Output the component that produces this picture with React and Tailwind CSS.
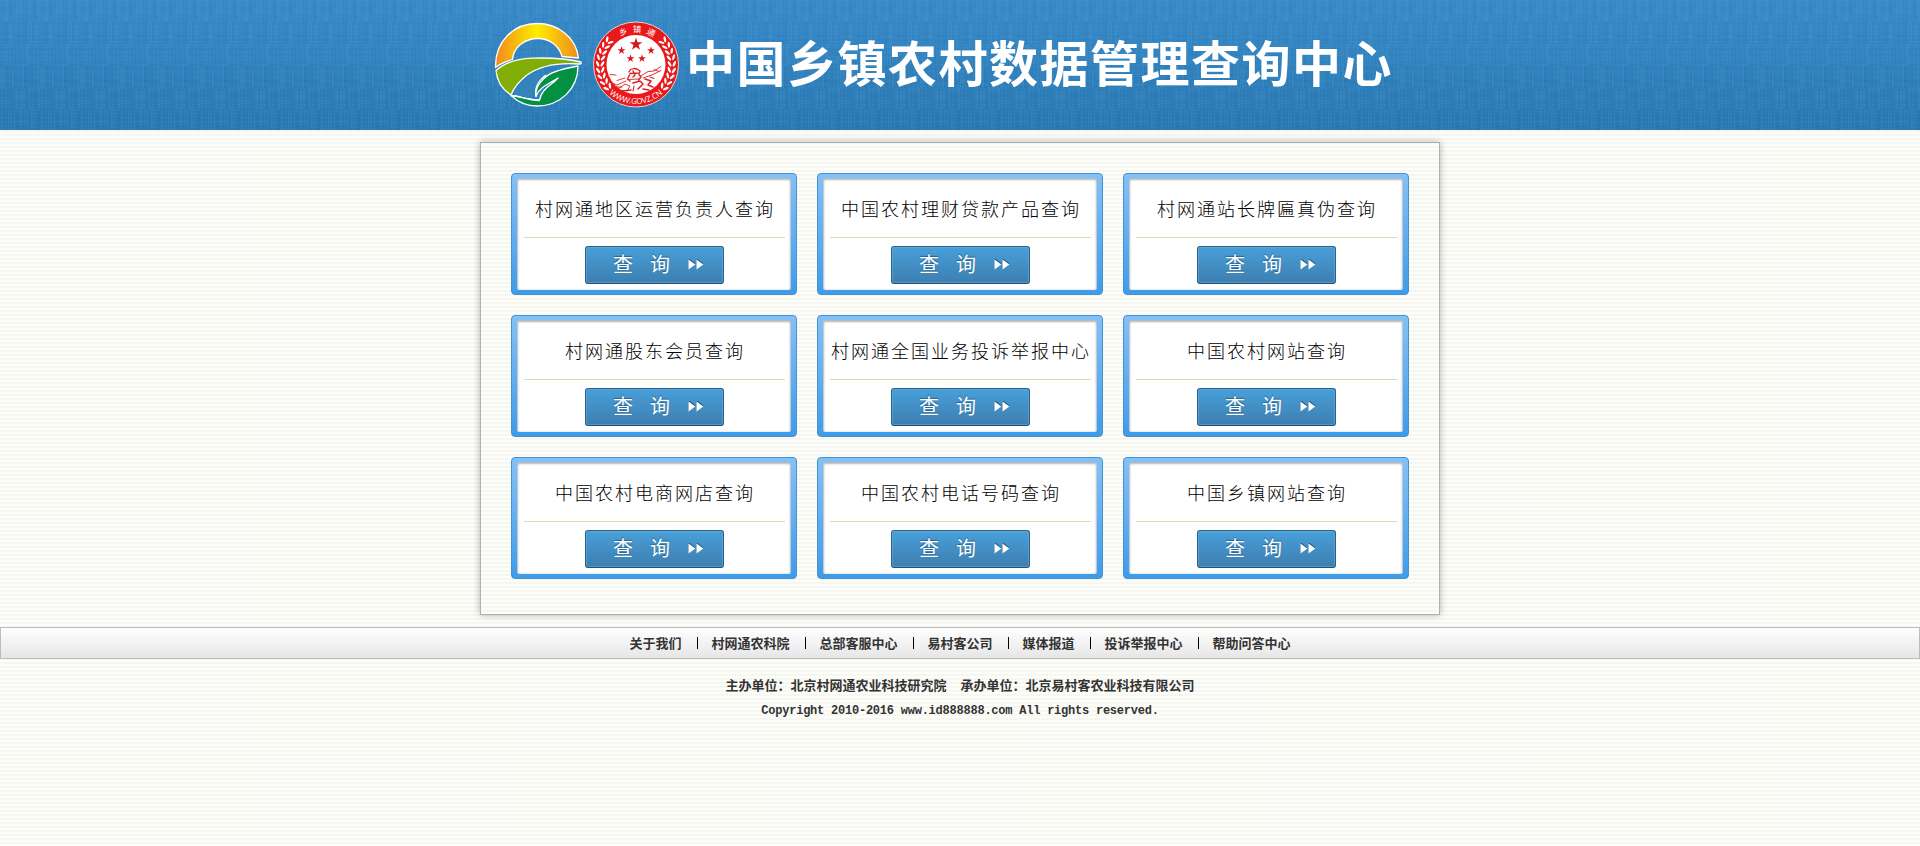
import React from 'react';

const SANS = "font-['Noto_Sans_CJK_SC',sans-serif]";

const cards = [
  '村网通地区运营负责人查询',
  '中国农村理财贷款产品查询',
  '村网通站长牌匾真伪查询',
  '村网通股东会员查询',
  '村网通全国业务投诉举报中心',
  '中国农村网站查询',
  '中国农村电商网店查询',
  '中国农村电话号码查询',
  '中国乡镇网站查询',
];

const links = ['关于我们', '村网通农科院', '总部客服中心', '易村客公司', '媒体报道', '投诉举报中心', '帮助问答中心'];

// Small deterministic generator for the woven header cloth.
const noise = (n) => {
  const v = Math.sin(n * 127.1 + 31.7) * 43758.5453;
  return v - Math.floor(v);
};

function Cloth() {
  const threads = [];
  for (let x = 0; x < 40; x++) {
    for (let b = 0; b < 6; b++) {
      const v = noise(x * 7 + b * 53);
      threads.push(
        <rect key={`v${x}-${b}`} x={x} y={b * 22} width="1" height="22" fill={v > 0.5 ? '#6fbcf0' : '#0b4f8c'} opacity={Math.abs(v - 0.5) * 0.2} />
      );
    }
  }
  for (let y = 0; y < 130; y++) {
    for (let b = 0; b < 3; b++) {
      const v = noise(y * 3 + b * 91 + 900);
      threads.push(
        <rect key={`h${y}-${b}`} x={b * 14} y={y} width="14" height="1" fill={v > 0.5 ? '#6fbcf0' : '#0b4f8c'} opacity={Math.abs(v - 0.5) * 0.13} />
      );
    }
  }
  return (
    <svg className="absolute inset-0 h-full w-full" aria-hidden="true">
      <defs>
        <pattern id="cloth" width="40" height="130" patternUnits="userSpaceOnUse">{threads}</pattern>
      </defs>
      <rect width="100%" height="100%" fill="url(#cloth)" />
    </svg>
  );
}

function SunLogo() {
  return (
    <svg width="90" height="86" viewBox="0 0 90 86" className="block">
      <defs>
        <linearGradient id="sun" x1="0" x2="1">
          <stop offset="0" stopColor="#f08a1c" />
          <stop offset="0.5" stopColor="#ffec00" />
          <stop offset="1" stopColor="#f08a1c" />
        </linearGradient>
      </defs>
      <g stroke="#fff" strokeWidth="1.3" strokeLinejoin="round">
        <path d="M1.5 45.5 C1 19 20 1.5 43 1.5 C65 1.5 82 16 84.5 36 L68 34.500 C65 23 55 16.500 44 16.500 C31 16.500 19.500 25 18.500 37.500 C12 39.500 6 42 1.500 45.500Z" fill="url(#sun)" />
        <path d="M2 48.500 C10 41 22 37 38 36.200 C56 35.500 72 36.500 87 40 C87.500 41.500 87 42 85.500 42 C66 40.500 47 43 33 53 C26 58.500 20 65 17 73 C7.500 67 2.800 58 2 48.500Z" fill="#80ae05" />
        <path d="M84 44 C66 47 55 51 50 56.500 C44 62 41 68 42 74 C45 66 54 62 64 56 C57 64 48 66 45.500 78 C36 78 25 74 17 73.500 C25 81 34 84 43 84 C66 84 84 67 84 44Z" fill="#029043" />
      </g>
      <path d="M20 72.500 C22 62 29 57 37 53.500 L52 53.500 C44 58 40 65 40.500 75 C33 77 26 74 20 72.500Z" fill="#3583bd" />
      <path d="M17 73.500 C25 73.500 34 78.500 45.500 78.500 M42 75 C40 64 45 58 52 53" fill="none" stroke="#fff" strokeWidth="1.3" />
    </svg>
  );
}

const STAR = 'M0 -1 L.2245 -.309 L.951 -.309 L.363 .118 L.588 .809 L0 .382 L-.588 .809 L-.363 .118 L-.951 -.309 L-.2245 -.309Z';

function Emblem() {
  const leaves = [];
  for (let i = 0; i < 9; i++) {
    const a = 141 + i * 10;
    for (const s of [1, -1]) {
      const t = (s === 1 ? a : 180 - a) * (Math.PI / 180);
      for (const [r, tilt] of [[33.600, 32], [38.300, -28]]) {
        const x = 43 + Math.cos(t) * r;
        const y = 43.5 + Math.sin(t) * r;
        const deg = (t * 180) / Math.PI + 90 + s * tilt;
        leaves.push(<ellipse key={`${i}${s}${r}`} cx={x} cy={y} rx="3.1" ry="1.2" fill="#fff" transform={`rotate(${deg} ${x} ${y})`} />);
      }
    }
  }
  const stars = [[43, 23.300, 6.800], [28.500, 29.500, 4.200], [58, 29.500, 4.200], [37.500, 37.500, 4.200], [49, 37.500, 4.200]];
  return (
    <svg width="86" height="88" viewBox="0 0 86 88" className="block">
      <circle cx="43" cy="43.5" r="42.500" fill="#e9191b" stroke="#f6dede" strokeWidth="0.9" />
      <circle cx="43" cy="43.5" r="29.500" fill="#fff" />
      {leaves}
      {stars.map(([x, y, r]) => (
        <path key={`${x}${y}`} d={STAR} fill="#d6161c" transform={`translate(${x} ${y}) scale(${r})`} />
      ))}
      <g fill="none" stroke="#dc2024" strokeLinecap="round" strokeLinejoin="round">
        <path d="M36 51 L37.500 48.500 L41 47.500 L44 48 L47 50 L46.500 52 L37 52.500" strokeWidth="1.300" />
        <path d="M36.500 54 L34.500 58 L37 60 M46 53.500 L48 56 L45.500 59 M40 50 L42 54 L40 56" strokeWidth="1.400" />
        <path d="M48 55 L55 50.500 L61 50 L68 45.500 M50 57 L59 54 L68 49.500 M61 48.500 L66 50.500" strokeWidth="0.900" />
        <path d="M35 58.500 L46 58 M33 60 L24 64 L19 62 M32 57 L24 59.500 M25 68 L32 63 L37 65 L34 70 M17 53.500 L23 54" strokeWidth="0.900" />
        <path d="M40 62 L47 60 L50 63 L45 68 M52 58 L58 60 L55 64 L60 66 M50 68 L56 69 M29 70 L38 69" strokeWidth="1.600" />
        <path d="M57 56 L61 57.500 M22 66 L29 66 M41 65 L40 70" strokeWidth="1.100" />
      </g>
      <defs>
        <path id="topArc" d="M11 43.500 A32 32 0 0 1 75 43.500" />
        <path id="bottomArc" d="M3.500 43.500 A39.500 39.500 0 0 0 82.500 43.500" />
      </defs>
      <text className={SANS} fontSize="8.500" fill="#fff" textAnchor="middle" letterSpacing="4.500">
        <textPath href="#topArc" startOffset="53%">乡镇通</textPath>
      </text>
      <text className="font-['Open_Sans',sans-serif]" fontSize="8" fill="#fff" textAnchor="middle">
        <textPath href="#bottomArc" startOffset="50%">WWW.GOVZ.CN</textPath>
      </text>
    </svg>
  );
}

function QueryButton() {
  return (
    <button className="flex h-[38px] w-[139px] items-center rounded-[3px] border border-[#2a618b] border-b-[#1f5077] bg-gradient-to-b from-[#499fd9] to-[#3d7fb0] pl-[27px] shadow-[inset_0_0_0_1px_rgba(110,180,225,0.45)]">
      <span className="-mt-0.5 w-[37px] text-left text-[20px] leading-[34px] text-white [text-shadow:0_-1px_1px_#2a618b]">查</span>
      <span className="-mt-0.5 w-[38px] text-left text-[20px] leading-[34px] text-white [text-shadow:0_-1px_1px_#2a618b]">询</span>
      <svg width="16" height="11" viewBox="0 0 16 11" className="-mt-0.5">
        <path d="M0.500 0 L7.500 5.500 L0.500 11Z M8.500 0 L15.500 5.500 L8.500 11Z" fill="#235b86" transform="translate(0 -1)" />
        <path d="M0.500 0.500 L7.300 5.500 L0.500 10.500Z M8.500 0.500 L15.300 5.500 L8.500 10.500Z" fill="#fff" />
      </svg>
    </button>
  );
}

function Card({ title }) {
  return (
    <div className="h-[122px] w-[286px] rounded-[4px] border border-[#4792cb] bg-gradient-to-b from-[#82c1f8] to-[#3c9ceb] px-[5px] pb-[4px] pt-[4px]">
      <div className="flex h-full flex-col items-center rounded-[2px] bg-white shadow-[inset_0_1px_2px_1px_rgba(70,80,95,0.42)]">
        <h2 className="mt-[14px] h-[32px] whitespace-nowrap pl-[2px] text-[18px] font-light leading-[32px] tracking-[2px] text-black">{title}</h2>
        <div className="ml-px mt-[13px] h-px w-[261px] bg-[#dcd9b4]" />
        <div className="ml-px mt-[8px]">
          <QueryButton />
        </div>
      </div>
    </div>
  );
}

export default function App() {
  return (
    <div className={`min-h-[846px] w-full bg-[#fdfdf9] bg-[repeating-linear-gradient(90deg,rgba(253,253,249,0.6)_0_1px,transparent_1px_2px),repeating-linear-gradient(180deg,#fdfdf9_0_2px,#f4f4ef_2px_4px)] ${SANS}`}>
      <header className="relative h-[130px] bg-gradient-to-b from-[#3a8dca] to-[#2a79b3]">
        <Cloth />
        <div className="relative mx-auto flex w-[960px] pl-[14px] pt-[22px]">
          <SunLogo />
          <div className="-mt-px ml-[9px]">
            <Emblem />
          </div>
          <h1 className="ml-[7px] mt-[2px] whitespace-nowrap text-[49px] font-bold leading-[74px] tracking-[1.5px] text-white">中国乡镇农村数据管理查询中心</h1>
        </div>
      </header>

      <main className="mx-auto mt-[12px] grid h-[473px] w-[960px] grid-cols-[286px_286px_286px] content-start gap-5 border border-[#b0b0b0] px-[30px] pt-[30px] shadow-[0_0_7px_rgba(0,0,0,0.3)]">
        {cards.map((title) => (
          <Card key={title} title={title} />
        ))}
      </main>

      <nav className="mt-[12px] flex h-[32px] items-center justify-center border border-[#bcbcbc] bg-gradient-to-b from-white to-[#e6e6e6] text-[13px] font-bold text-[#333]">
        {links.map((link, i) => (
          <React.Fragment key={link}>
            {i > 0 && <span className="ml-[15.5px] mr-[13.5px] h-[12px] w-px bg-black" />}
            <a className="leading-[20px]">{link}</a>
          </React.Fragment>
        ))}
      </nav>

      <footer className="pt-[14px] text-center text-[13px] font-bold leading-[24px] text-[#333]">
        <p className="flex justify-center gap-[14px]">
          <span>主办单位：北京村网通农业科技研究院</span>
          <span>承办单位：北京易村客农业科技有限公司</span>
        </p>
        <p className="mt-[2px] font-['Liberation_Mono',monospace] text-[12px] tracking-[-0.230px]">Copyright 2010-2016 www.id888888.com All rights reserved.</p>
      </footer>
    </div>
  );
}
